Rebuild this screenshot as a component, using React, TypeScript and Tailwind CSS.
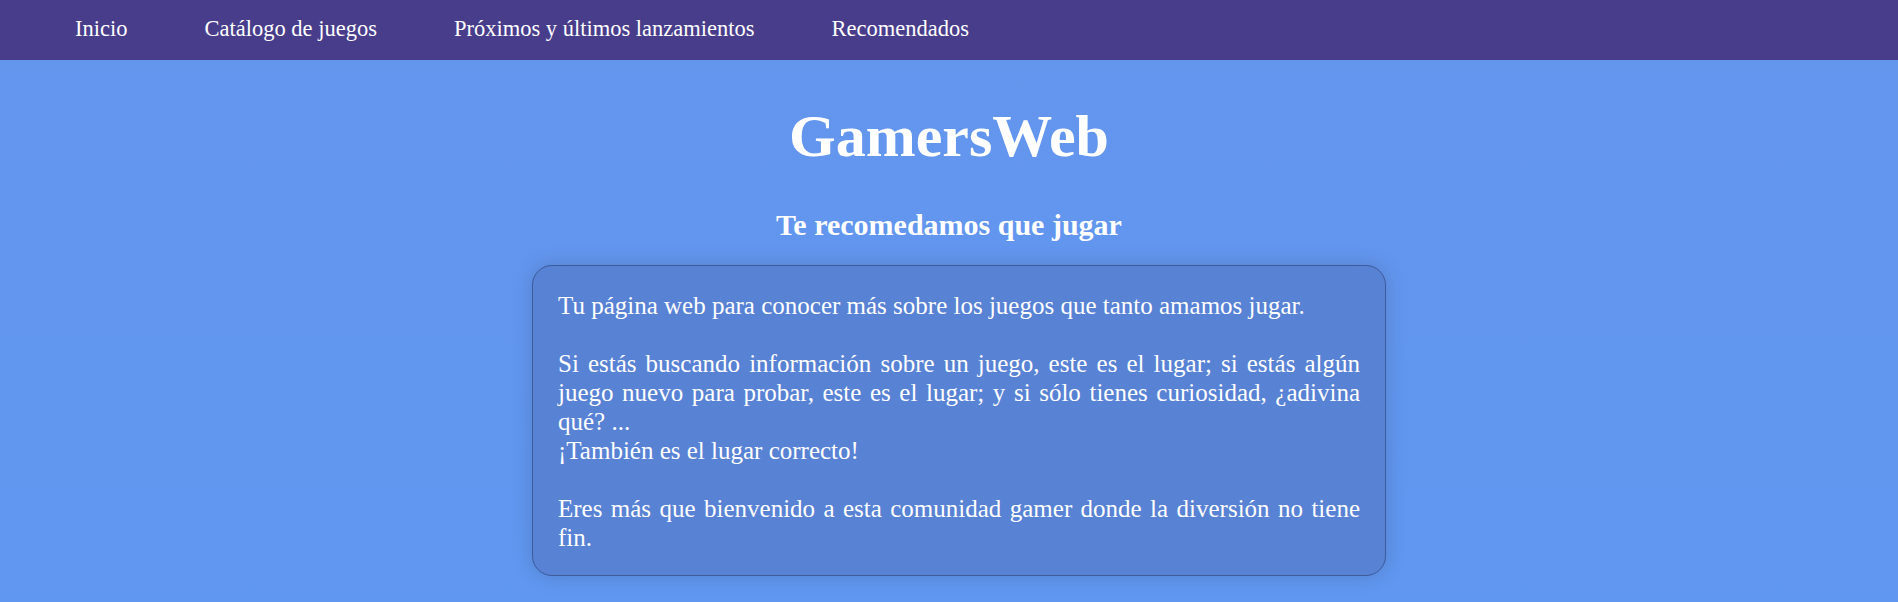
const links = [
  "Inicio",
  "Catálogo de juegos",
  "Próximos y últimos lanzamientos",
  "Recomendados",
];

const App = () => {
  return (
    <div
      className="min-h-screen bg-gradient-to-b from-[#6495ed] to-[#6097f0] text-white leading-[normal]"
      style={{ fontFamily: '"Liberation Serif", "Times New Roman", serif' }}
    >
      <nav className="h-[60px] bg-[#483d8b] flex items-center pl-[75px] gap-[77px] text-[22.5px] pb-[2px]">
        {links.map((link) => (
          <a key={link} href="#" className="text-white">
            {link}
          </a>
        ))}
      </nav>

      <h1 className="text-center font-bold text-[60px] leading-none mt-[46px]">
        GamersWeb
      </h1>
      <h2 className="text-center font-bold text-[30px] mt-[42px]">
        Te recomedamos que jugar
      </h2>

      <div className="pl-[20px] mt-[23px]">
        <div className="mx-auto w-[854px] bg-[#5882d4] border border-[#3d5a9a] rounded-[20px] px-[25px] pt-[25px] pb-[23px] text-[25px] leading-[29px] text-justify shadow-[0_0_20px_rgba(0,0,0,0.15)]">
          <p>
            Tu página web para conocer más sobre los juegos que tanto amamos jugar.
            <br />
            <br />
            Si estás buscando información sobre un juego, este es el lugar; si estás
            algún juego nuevo para probar, este es el lugar; y si sólo tienes
            curiosidad, ¿adivina qué? ...
            <br />
            ¡También es el lugar correcto!
            <br />
            <br />
            Eres más que bienvenido a esta comunidad gamer donde la diversión no tiene
            fin.
          </p>
        </div>
      </div>
    </div>
  );
};

export default App;
